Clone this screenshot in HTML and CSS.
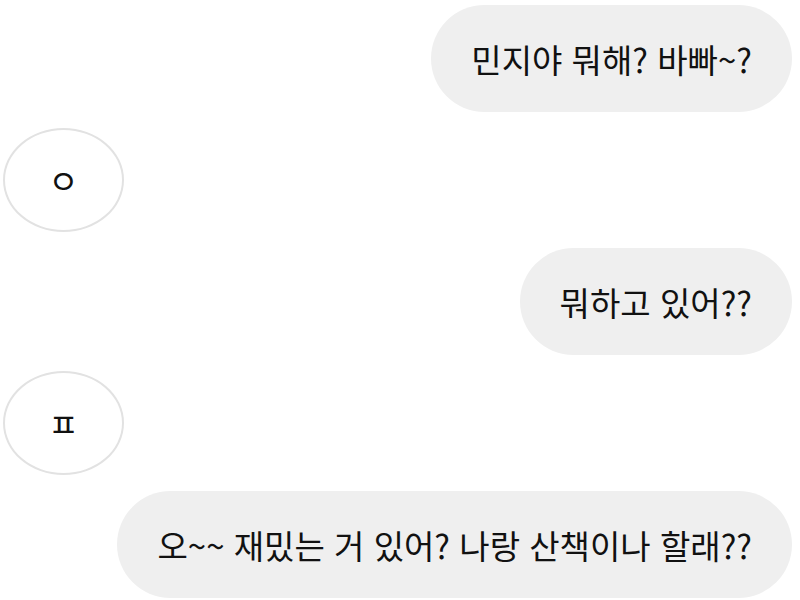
FILE: index.html
```html
<!DOCTYPE html>
<html lang="ko">

<head>
	<meta charset="utf-8">
	<title>대화</title>
	<link rel="stylesheet" href="styles.css">
</head>

<body>
	<div class="chat">
		<div class="msg me">민지야 뭐해? 바빠~?</div>
		<div class="msg other">ㅇ</div>
		<div class="msg me">뭐하고 있어??</div>
		<div class="msg other">ㅍ</div>
		<div class="msg me">오~~ 재밌는 거 있어? 나랑 산책이나 할래??</div>
	</div>
</body>

</html>
```
FILE: styles.css
```css
* {
	margin: 0px;
	padding: 0px;
	box-sizing: border-box;
}

body {
	background: #fff;
	font-family: "Noto Sans CJK KR", "Noto Sans", sans-serif;
	color: #111;
}

.chat {
	display: flex;
	flex-direction: column;
	gap: 16px;
	padding: 5px 8px 0px 3px;
}

.msg {
	height: 107px;
	display: flex;
	align-items: center;
	justify-content: center;
	font-size: 33px;
}

.msg.me {
	align-self: flex-end;
	padding: 0px 40px;
	background: #efefef;
	border-radius: 54px;
}

.msg.other {
	align-self: flex-start;
	width: 121px;
	height: 104px;
	border: 2px solid #e2e2e2;
	border-radius: 50%;
}
```
